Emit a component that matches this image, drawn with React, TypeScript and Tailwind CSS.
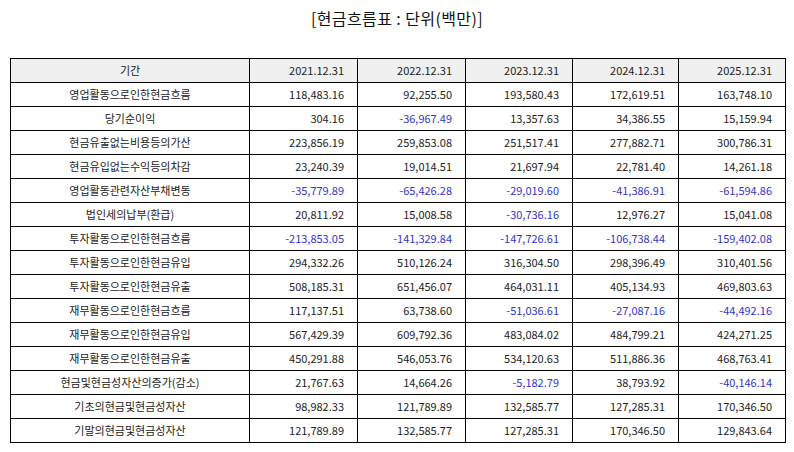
import React from "react";

const years = ["2021.12.31", "2022.12.31", "2023.12.31", "2024.12.31", "2025.12.31"];

const rows: [string, string[]][] = [
  ["영업활동으로인한현금흐름", ["118,483.16", "92,255.50", "193,580.43", "172,619.51", "163,748.10"]],
  ["당기순이익", ["304.16", "-36,967.49", "13,357.63", "34,386.55", "15,159.94"]],
  ["현금유출없는비용등의가산", ["223,856.19", "259,853.08", "251,517.41", "277,882.71", "300,786.31"]],
  ["현금유입없는수익등의차감", ["23,240.39", "19,014.51", "21,697.94", "22,781.40", "14,261.18"]],
  ["영업활동관련자산부채변동", ["-35,779.89", "-65,426.28", "-29,019.60", "-41,386.91", "-61,594.86"]],
  ["법인세의납부(환급)", ["20,811.92", "15,008.58", "-30,736.16", "12,976.27", "15,041.08"]],
  ["투자활동으로인한현금흐름", ["-213,853.05", "-141,329.84", "-147,726.61", "-106,738.44", "-159,402.08"]],
  ["투자활동으로인한현금유입", ["294,332.26", "510,126.24", "316,304.50", "298,396.49", "310,401.56"]],
  ["투자활동으로인한현금유출", ["508,185.31", "651,456.07", "464,031.11", "405,134.93", "469,803.63"]],
  ["재무활동으로인한현금흐름", ["117,137.51", "63,738.60", "-51,036.61", "-27,087.16", "-44,492.16"]],
  ["재무활동으로인한현금유입", ["567,429.39", "609,792.36", "483,084.02", "484,799.21", "424,271.25"]],
  ["재무활동으로인한현금유출", ["450,291.88", "546,053.76", "534,120.63", "511,886.36", "468,763.41"]],
  ["현금및현금성자산의증가(감소)", ["21,767.63", "14,664.26", "-5,182.79", "38,793.92", "-40,146.14"]],
  ["기초의현금및현금성자산", ["98,982.33", "121,789.89", "132,585.77", "127,285.31", "170,346.50"]],
  ["기말의현금및현금성자산", ["121,789.89", "132,585.77", "127,285.31", "170,346.50", "129,843.64"]],
];

export default function App() {
  return (
    <div
      className="w-[794px] h-[452px] bg-white text-[#222] flex flex-col"
      style={{ fontFamily: '"Noto Sans CJK KR", "Noto Sans", sans-serif' }}
    >
      <div className="h-[36px] pt-[6px] text-center text-[16px] leading-[24px] tracking-[0.4px] text-[#111]">
        [현금흐름표 : 단위(백만)]
      </div>
      <div className="pt-[22px] pl-[10px]">
        <table className="border-collapse table-fixed w-[775px] text-[11px]">
          <colgroup>
            <col className="w-[239px]" />
            <col className="w-[108px]" />
            <col className="w-[108px]" />
            <col className="w-[107px]" />
            <col className="w-[106px]" />
            <col className="w-[107px]" />
          </colgroup>
          <thead>
            <tr className="h-[24px] bg-[#f0f0f0]">
              <th className="border border-black font-normal text-center p-0">기간</th>
              {years.map((y) => (
                <th key={y} className="border border-black font-normal text-right pr-[13px] p-0">
                  {y}
                </th>
              ))}
            </tr>
          </thead>
          <tbody>
            {rows.map(([label, vals]) => (
              <tr key={label} className="h-[24px]">
                <td className="border border-black text-center p-0">{label}</td>
                {vals.map((v, i) => (
                  <td
                    key={i}
                    className={
                      v.startsWith("-")
                        ? "border border-black text-right pr-[13px] p-0 text-[#3333cc]"
                        : "border border-black text-right pr-[13px] p-0"
                    }
                  >
                    {v}
                  </td>
                ))}
              </tr>
            ))}
          </tbody>
        </table>
      </div>
    </div>
  );
}
